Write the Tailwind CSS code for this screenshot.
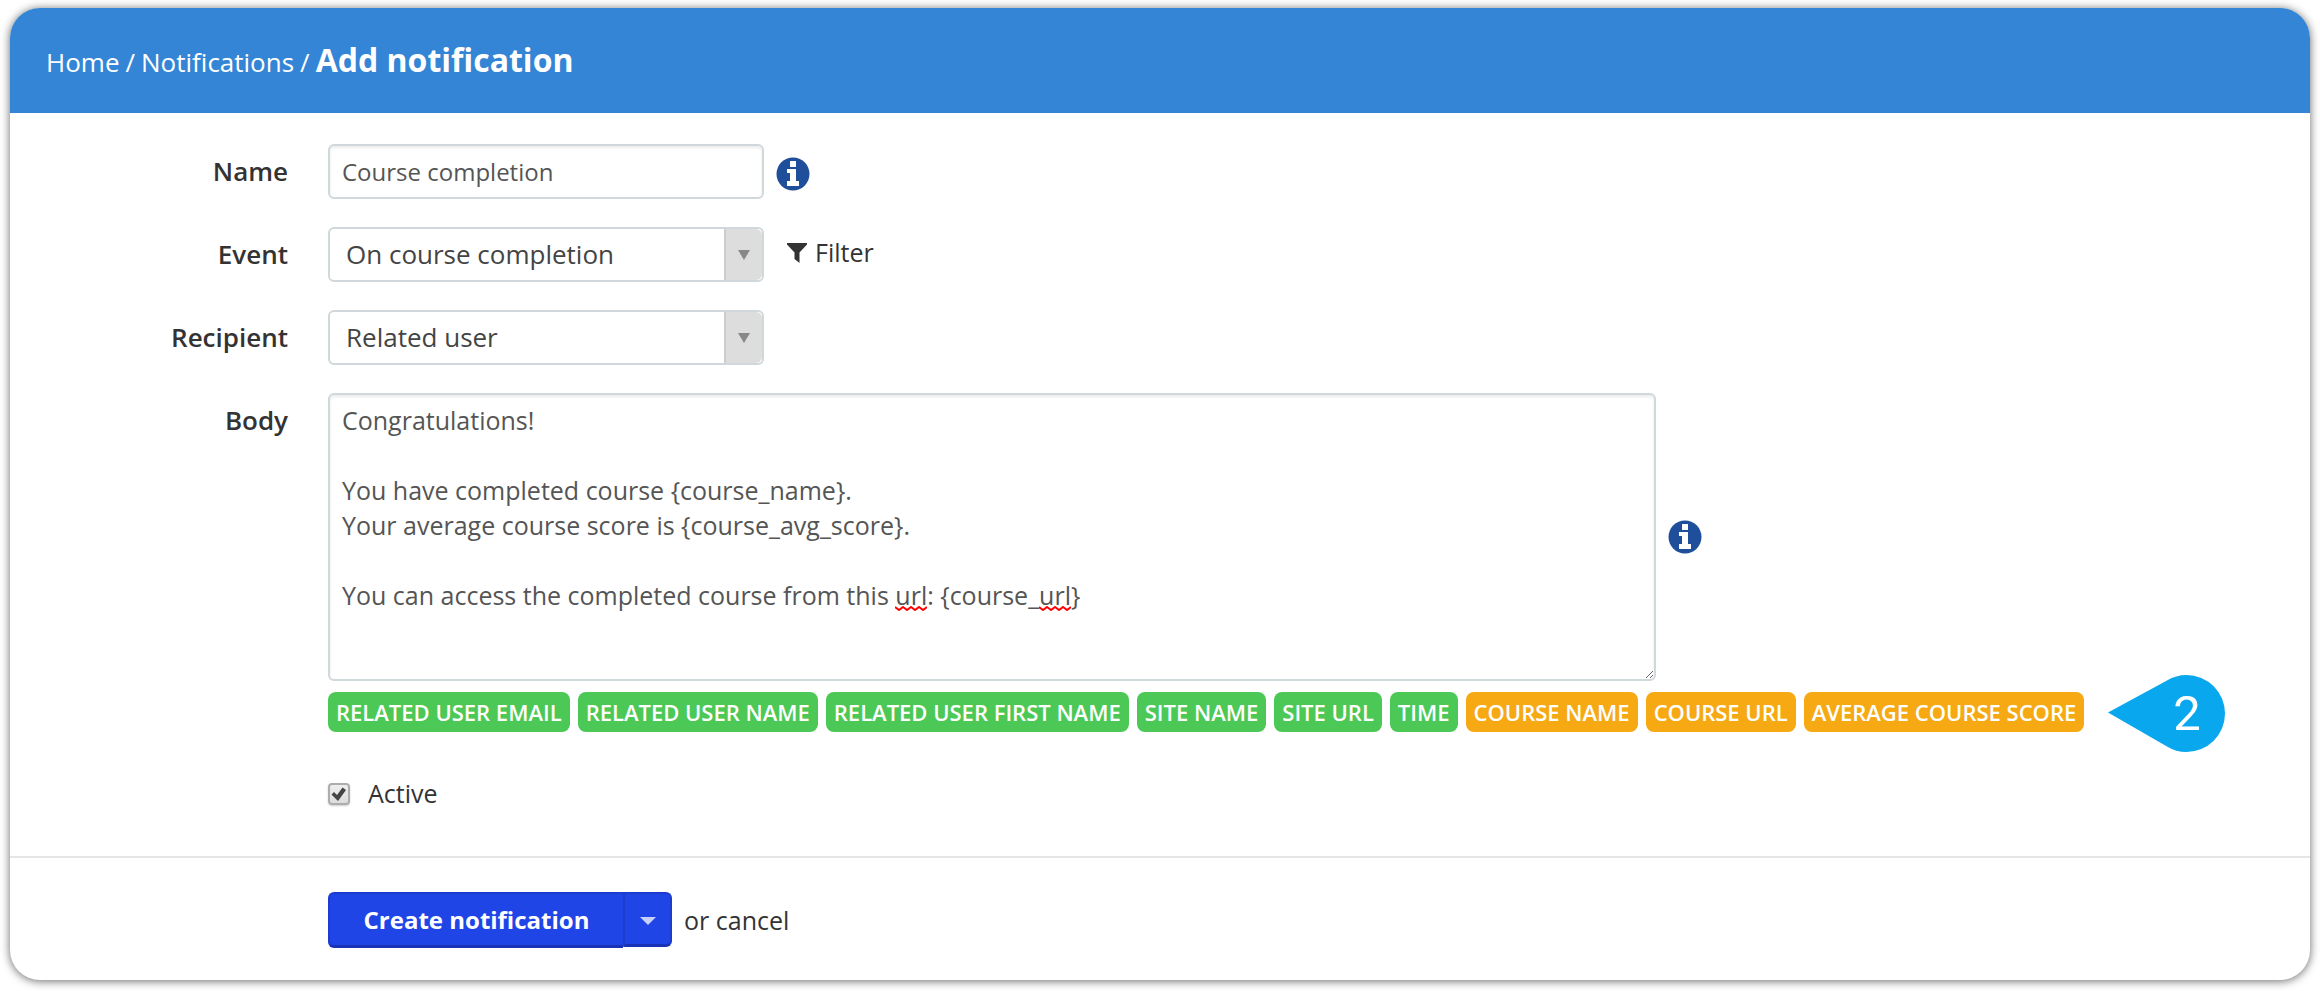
<!DOCTYPE html>
<html lang="en">

<head>
    <meta charset="UTF-8">
    <meta name="viewport" content="width=device-width, initial-scale=1.0">
    <title>Add notification</title>

    <!--Tailwind library-->
    <script src="https://cdn.jsdelivr.net/npm/@tailwindcss/browser@4"></script>
</head>

<body class="bg-white font-['Open_Sans',sans-serif] text-[25px] leading-[35px] text-[#333333]">
    <div class="mt-2 mx-[10px] mb-3 rounded-[30px] overflow-hidden bg-white shadow-[0_1px_10px_rgba(0,0,0,0.6)]">

        <!--Header-->
        <header class="bg-[#3485d5] text-white px-9 h-[105px] flex items-center">
            <nav class="flex items-baseline gap-[6px] text-[26px]" aria-label="Breadcrumb">
                <a href="#">Home</a>
                <span>/</span>
                <a href="#">Notifications</a>
                <span>/</span>
                <h1 class="text-[32px] font-bold">Add notification</h1>
            </nav>
        </header>

        <form>
            <div class="flex flex-col gap-7 pt-[31px] pb-[45px]">
                <!--Name-->
                <div class="flex gap-10">
                    <label for="name" class="w-[278px] shrink-0 text-right text-[26px] font-semibold pt-[10px]">Name</label>
                    <div class="flex items-center gap-3">
                        <input type="text" id="name" value="Course completion"
                            class="w-[436px] h-[55px] px-3 border-2 border-[#d0d8dc] rounded-md text-[24px] text-[#555555] bg-white shadow-[inset_0_2px_3px_rgba(0,0,0,0.08)] outline-none">
                        <button type="button" aria-label="Name help" class="mt-1">
                            <svg class="w-[34px] h-[34px]" viewBox="0 0 34 34">
                                <circle cx="17" cy="17" r="16.5" fill="#1f4f9b" />
                                <path fill="#ffffff" d="M14 4h6v6h-6zM11 12h9v12h3v5H11v-5h3v-8h-3z" />
                            </svg>
                        </button>
                    </div>
                </div>

                <!--Event-->
                <div class="flex gap-10">
                    <label for="event" class="w-[278px] shrink-0 text-right text-[26px] font-semibold pt-[10px]">Event</label>
                    <div class="flex items-center gap-[23px]">
                        <div class="relative w-[436px] h-[55px]">
                            <select id="event"
                                class="appearance-none w-full h-full pl-4 pr-12 border-2 border-[#d0d8dc] rounded-md text-[26px] text-[#444444] bg-white outline-none">
                                <option>On course completion</option>
                            </select>
                            <span
                                class="absolute top-[2px] right-[2px] bottom-[2px] w-[38px] rounded-r-md border-l-2 border-[#cccccc] bg-[#dddddd] flex justify-center items-center pointer-events-none">
                                <svg class="w-3 h-[10px]" viewBox="0 0 12 10">
                                    <path fill="#888888" d="M0 0h12L6 10z" />
                                </svg>
                            </span>
                        </div>
                        <a href="#" class="flex items-center gap-2 mb-1">
                            <svg class="w-5 h-5" viewBox="0 0 20 20">
                                <path fill="#333333" d="M0 0h20v1.500L12.500 9.500V20L7.500 16V9.500L0 1.500z" />
                            </svg>
                            Filter
                        </a>
                    </div>
                </div>

                <!--Recipient-->
                <div class="flex gap-10">
                    <label for="recipient"
                        class="w-[278px] shrink-0 text-right text-[26px] font-semibold pt-[10px]">Recipient</label>
                    <div class="relative w-[436px] h-[55px]">
                        <select id="recipient"
                            class="appearance-none w-full h-full pl-4 pr-12 border-2 border-[#d0d8dc] rounded-md text-[26px] text-[#444444] bg-white outline-none">
                            <option>Related user</option>
                        </select>
                        <span
                            class="absolute top-[2px] right-[2px] bottom-[2px] w-[38px] rounded-r-md border-l-2 border-[#cccccc] bg-[#dddddd] flex justify-center items-center pointer-events-none">
                            <svg class="w-3 h-[10px]" viewBox="0 0 12 10">
                                <path fill="#888888" d="M0 0h12L6 10z" />
                            </svg>
                        </span>
                    </div>
                </div>

                <!--Body-->
                <div class="flex gap-10">
                    <label for="body" class="w-[278px] shrink-0 text-right text-[26px] font-semibold pt-[10px]">Body</label>
                    <div class="flex-1 min-w-0">
                        <div class="flex items-center gap-3">
                            <div class="relative w-full max-w-[1328px]">
                                <textarea id="body" spellcheck="false"
                                    class="block w-full h-[288px] px-3 py-2 border-2 border-[#d0d8dc] rounded-md text-[25px] leading-[35px] text-[#555555] bg-white shadow-[inset_0_2px_3px_rgba(0,0,0,0.08)] outline-none resize-y">Congratulations!

You have completed course {course_name}.
Your average course score is {course_avg_score}.

You can access the completed course from this url: {course_url}</textarea>
                                <!--Spelling marks-->
                                <svg class="absolute left-[567px] top-[213px] w-8 h-[5px] pointer-events-none"
                                    viewBox="0 0 32 5" fill="none" stroke="#ff0000" stroke-width="2">
                                    <path d="M0 1l4 3 4-3 4 3 4-3 4 3 4-3 4 3 4-3" />
                                </svg>
                                <svg class="absolute left-[711px] top-[213px] w-8 h-[5px] pointer-events-none"
                                    viewBox="0 0 32 5" fill="none" stroke="#ff0000" stroke-width="2">
                                    <path d="M0 1l4 3 4-3 4 3 4-3 4 3 4-3 4 3 4-3" />
                                </svg>
                            </div>
                            <button type="button" aria-label="Body help" class="shrink-0">
                                <svg class="w-[34px] h-[34px]" viewBox="0 0 34 34">
                                    <circle cx="17" cy="17" r="16.5" fill="#1f4f9b" />
                                    <path fill="#ffffff" d="M14 4h6v6h-6zM11 12h9v12h3v5H11v-5h3v-8h-3z" />
                                </svg>
                            </button>
                        </div>

                        <!--Smart tags-->
                        <div class="relative flex flex-wrap gap-2 mt-[11px] text-[22px] leading-[40px] font-semibold text-white">
                            <button type="button" class="bg-[#4bc856] rounded-lg px-2">RELATED USER EMAIL</button>
                            <button type="button" class="bg-[#4bc856] rounded-lg px-2">RELATED USER NAME</button>
                            <button type="button" class="bg-[#4bc856] rounded-lg px-2">RELATED USER FIRST NAME</button>
                            <button type="button" class="bg-[#4bc856] rounded-lg px-2">SITE NAME</button>
                            <button type="button" class="bg-[#4bc856] rounded-lg px-2">SITE URL</button>
                            <button type="button" class="bg-[#4bc856] rounded-lg px-2">TIME</button>
                            <button type="button" class="bg-[#f6a913] rounded-lg px-2">COURSE NAME</button>
                            <button type="button" class="bg-[#f6a913] rounded-lg px-2">COURSE URL</button>
                            <button type="button" class="bg-[#f6a913] rounded-lg px-2">AVERAGE COURSE SCORE</button>

                            <!--Step marker-->
                            <div class="absolute right-[85px] top-[-17px] w-[117px] h-[77px]">
                                <svg class="w-full h-full" viewBox="0 0 117 77">
                                    <path fill="#08a7ee"
                                        d="M0 37.500L59 5.500Q68 0 78.500 0a38.500 38.500 0 0 1 0 77Q68 77 59 71.500z" />
                                </svg>
                                <span
                                    class="absolute inset-y-0 right-0 w-[76px] flex justify-center items-center font-[Roboto,sans-serif] font-normal text-[49px]">2</span>
                            </div>
                        </div>
                    </div>
                </div>

                <!--Active-->
                <div class="flex items-center gap-[18px] ml-[318px] mt-4">
                    <span class="relative w-[22px] h-[22px]">
                        <input type="checkbox" id="active" checked
                            class="peer appearance-none block w-full h-full border-2 border-[#adadad] rounded-[4px] bg-linear-to-b from-[#eeeeee] to-[#dddddd] shadow-[0_1px_2px_rgba(0,0,0,0.2)]">
                        <svg class="absolute inset-0 hidden peer-checked:block pointer-events-none" viewBox="0 0 22 22">
                            <path fill="#444444" d="M3.500 11.500L6 9l3 3 5.500-7.500L18 7l-8 11z" />
                        </svg>
                    </span>
                    <label for="active">Active</label>
                </div>
            </div>

            <!--Form buttons-->
            <div class="flex items-center border-t-2 border-[#e6e6e6] pt-[34px] pb-8 pl-[318px]">
                <button type="submit"
                    class="h-[56px] w-[295px] rounded-l-md bg-[#2045e7] text-white font-bold text-[24px] border-2 border-r-0 border-[#1d3ccf] border-b-[3px] border-b-[#1a33b5]">Create
                    notification</button>
                <button type="button" aria-label="More options"
                    class="h-[55px] w-[49px] mb-px rounded-r-md bg-[#2045e7] border-2 border-[#1d3ccf] border-b-[3px] border-b-[#1a33b5] flex justify-center items-center">
                    <svg class="w-4 h-2 mt-1" viewBox="0 0 16 8">
                        <path fill="#c7d0f8" d="M0 0h16L8 8z" />
                    </svg>
                </button>
                <p class="ml-3">or <a href="#">cancel</a></p>
            </div>
        </form>
    </div>
</body>

</html>
